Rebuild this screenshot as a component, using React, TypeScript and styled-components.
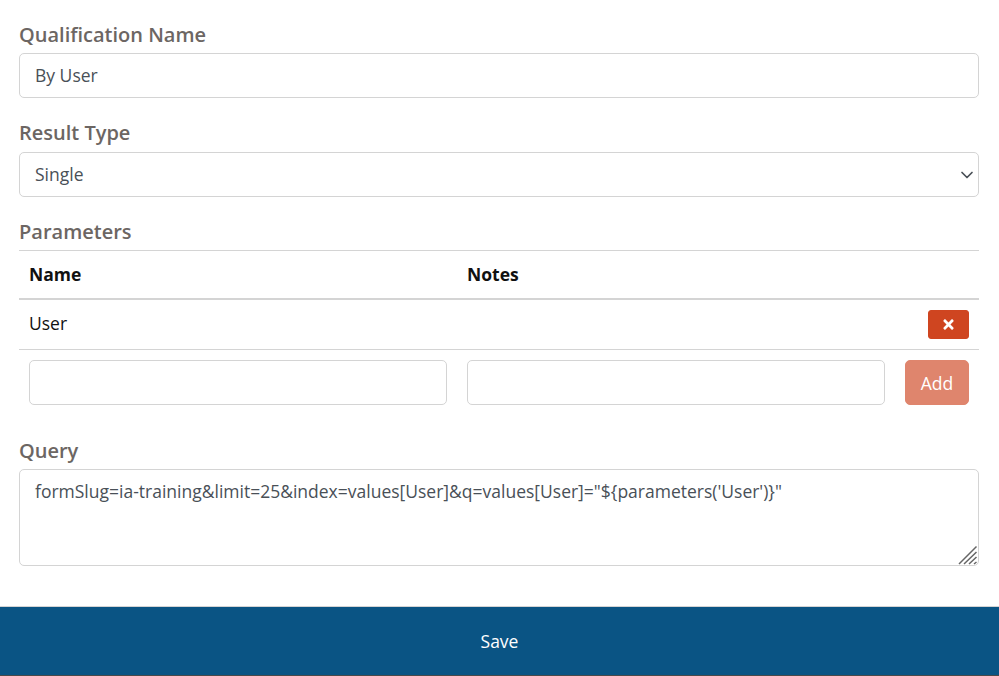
import React from "react";
import styled, { createGlobalStyle } from "styled-components";
import { FaTimes } from "react-icons/fa";

const Global = createGlobalStyle`
  html, body { margin: 0; padding: 0; background: #fff; }
  body { font-family: "Open Sans", sans-serif; font-size: 17.5px; line-height: 1.5; color: #111; overflow: hidden; }
  * { box-sizing: border-box; }
`;

const Page = styled.div`
  height: 676px;
  display: flex;
  flex-direction: column;
  justify-content: space-between;
`;

const Form = styled.form`
  display: flex;
  flex-direction: column;
  padding: 21px 20px 0 19px;
`;

const Group = styled.div`
  display: flex;
  flex-direction: column;
  margin-bottom: 21px;
`;

const QueryGroup = styled.div`
  display: flex;
  flex-direction: column;
`;

const Label = styled.label<{ $gap?: number }>`
  font-size: 20px;
  line-height: 27px;
  font-weight: 600;
  color: #6c6663;
  margin-bottom: ${(p) => p.$gap ?? 5}px;
`;

const Input = styled.input`
  display: block;
  width: 100%;
  height: 45px;
  padding: 4px 15px 6px;
  font: 400 17.5px/1.5 "Open Sans", sans-serif;
  color: #495057;
  background: #fff;
  border: 1px solid #d4d4d4;
  border-radius: 5px;
  outline: none;
`;

const SelectWrap = styled.div`
  position: relative;
  display: block;
`;

const Select = styled.select`
  display: block;
  width: 100%;
  height: 45px;
  padding: 6px 40px 6px 15px;
  font: 400 17.5px/1.5 "Open Sans", sans-serif;
  color: #495057;
  background: #fff;
  border: 1px solid #d4d4d4;
  border-radius: 5px;
  outline: none;
  appearance: none;
`;

const Chevron = styled.svg`
  position: absolute;
  right: 5px;
  top: 17px;
  width: 14px;
  height: 11px;
  pointer-events: none;
`;

const AreaWrap = styled.div`
  position: relative;
`;

const TextArea = styled.textarea`
  display: block;
  width: 100%;
  height: 97px;
  padding: 8px 15px;
  font: 400 17.5px/1.5 "Open Sans", sans-serif;
  color: #495057;
  background: #fff;
  border: 1px solid #d4d4d4;
  border-radius: 5px;
  outline: none;
  resize: none;
`;

const Grip = styled.svg`
  position: absolute;
  right: 1px;
  bottom: 1px;
  width: 20px;
  height: 20px;
  pointer-events: none;
`;

const Table = styled.table`
  width: 100%;
  border-collapse: collapse;
  table-layout: fixed;
  margin-bottom: 22px;
`;

const Th = styled.th<{ $width?: number }>`
  width: ${(p) => (p.$width ? `${p.$width}px` : "auto")};
  height: 48px;
  padding: 0 10px;
  text-align: left;
  font-size: 17.5px;
  font-weight: 700;
  color: #111;
  border-top: 1px solid #d4d4d4;
  border-bottom: 2px solid #d4d4d4;
`;

const Td = styled.td`
  height: 50px;
  padding: 8px 10px 10px;
  font-size: 17.5px;
  color: #111;
  border-bottom: 1px solid #d4d4d4;
`;

const ActionTd = styled(Td)`
  padding: 10px;
  text-align: right;
`;

const EntryTd = styled.td<{ $right?: boolean }>`
  padding: 10px;
  text-align: ${(p) => (p.$right ? "right" : "left")};
`;

const RemoveButton = styled.button`
  display: inline-flex;
  align-items: center;
  justify-content: center;
  width: 41px;
  height: 29px;
  padding: 0;
  border: 1px solid #cf4520;
  border-radius: 3px;
  background: #cf4520;
  color: #fff;
  font-size: 15px;
  vertical-align: middle;
`;

const AddButton = styled.button`
  width: 64px;
  height: 45px;
  padding: 0;
  border: 1px solid #cf4520;
  border-radius: 5px;
  background: #cf4520;
  color: #fff;
  font: 400 17.5px/1.5 "Open Sans", sans-serif;
  opacity: 0.65;
  vertical-align: middle;
`;

const SaveBar = styled.button`
  display: block;
  width: 100%;
  height: 70px;
  border: 0;
  border-top: 1px solid #d4d4d4;
  border-bottom: 1px solid #4a4a4a;
  background: #0a5484;
  color: #fff;
  font: 400 17.5px/1.5 "Open Sans", sans-serif;
`;

export default function App() {
  return (
    <Page>
      <Global />
      <Form onSubmit={(e) => e.preventDefault()}>
        <Group>
          <Label>Qualification Name</Label>
          <Input defaultValue="By User" />
        </Group>
        <Group>
          <Label $gap={6}>Result Type</Label>
          <SelectWrap>
            <Select defaultValue="Single">
              <option>Single</option>
              <option>Multiple</option>
            </Select>
            <Chevron viewBox="0 0 14 11" aria-hidden="true">
              <path d="M2 3.500l5 5 5-5" fill="none" stroke="#495057" strokeWidth="1.7" strokeLinecap="round" strokeLinejoin="round" />
            </Chevron>
          </SelectWrap>
        </Group>
        <Label as="div">Parameters</Label>
        <Table>
          <thead>
            <tr>
              <Th $width={438}>Name</Th>
              <Th $width={438}>Notes</Th>
              <Th />
            </tr>
          </thead>
          <tbody>
            <tr>
              <Td>User</Td>
              <Td />
              <ActionTd>
                <RemoveButton type="button" aria-label="Remove">
                  <FaTimes />
                </RemoveButton>
              </ActionTd>
            </tr>
            <tr>
              <EntryTd>
                <Input />
              </EntryTd>
              <EntryTd>
                <Input />
              </EntryTd>
              <EntryTd $right>
                <AddButton type="button" disabled>
                  Add
                </AddButton>
              </EntryTd>
            </tr>
          </tbody>
        </Table>
        <QueryGroup>
          <Label>Query</Label>
          <AreaWrap>
            <TextArea defaultValue={`formSlug=ia-training&limit=25&index=values[User]&q=values[User]="\${parameters('User')}"`} />
            <Grip viewBox="0 0 20 20" aria-hidden="true">
              <path d="M1 19L18.500 1.500M6 19L18.500 7M11 19L18.500 12M16 19L18.500 17" stroke="#666" strokeWidth="1.5" fill="none" />
            </Grip>
          </AreaWrap>
        </QueryGroup>
      </Form>
      <SaveBar type="button">Save</SaveBar>
    </Page>
  );
}
